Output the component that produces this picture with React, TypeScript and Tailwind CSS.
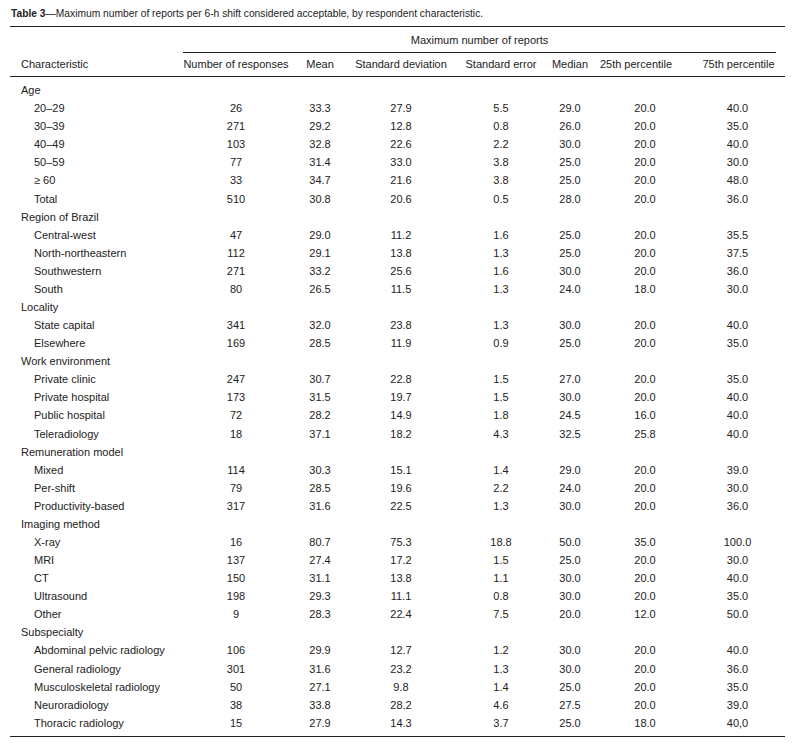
import React from "react";

type Row = { label: string; group?: boolean; v?: string[] };

const rows: Row[] = [
  { label: "Age", group: true },
  { label: "20–29", v: ["26", "33.3", "27.9", "5.5", "29.0", "20.0", "40.0"] },
  { label: "30–39", v: ["271", "29.2", "12.8", "0.8", "26.0", "20.0", "35.0"] },
  { label: "40–49", v: ["103", "32.8", "22.6", "2.2", "30.0", "20.0", "40.0"] },
  { label: "50–59", v: ["77", "31.4", "33.0", "3.8", "25.0", "20.0", "30.0"] },
  { label: "≥ 60", v: ["33", "34.7", "21.6", "3.8", "25.0", "20.0", "48.0"] },
  { label: "Total", v: ["510", "30.8", "20.6", "0.5", "28.0", "20.0", "36.0"] },
  { label: "Region of Brazil", group: true },
  { label: "Central-west", v: ["47", "29.0", "11.2", "1.6", "25.0", "20.0", "35.5"] },
  { label: "North-northeastern", v: ["112", "29.1", "13.8", "1.3", "25.0", "20.0", "37.5"] },
  { label: "Southwestern", v: ["271", "33.2", "25.6", "1.6", "30.0", "20.0", "36.0"] },
  { label: "South", v: ["80", "26.5", "11.5", "1.3", "24.0", "18.0", "30.0"] },
  { label: "Locality", group: true },
  { label: "State capital", v: ["341", "32.0", "23.8", "1.3", "30.0", "20.0", "40.0"] },
  { label: "Elsewhere", v: ["169", "28.5", "11.9", "0.9", "25.0", "20.0", "35.0"] },
  { label: "Work environment", group: true },
  { label: "Private clinic", v: ["247", "30.7", "22.8", "1.5", "27.0", "20.0", "35.0"] },
  { label: "Private hospital", v: ["173", "31.5", "19.7", "1.5", "30.0", "20.0", "40.0"] },
  { label: "Public hospital", v: ["72", "28.2", "14.9", "1.8", "24.5", "16.0", "40.0"] },
  { label: "Teleradiology", v: ["18", "37.1", "18.2", "4.3", "32.5", "25.8", "40.0"] },
  { label: "Remuneration model", group: true },
  { label: "Mixed", v: ["114", "30.3", "15.1", "1.4", "29.0", "20.0", "39.0"] },
  { label: "Per-shift", v: ["79", "28.5", "19.6", "2.2", "24.0", "20.0", "30.0"] },
  { label: "Productivity-based", v: ["317", "31.6", "22.5", "1.3", "30.0", "20.0", "36.0"] },
  { label: "Imaging method", group: true },
  { label: "X-ray", v: ["16", "80.7", "75.3", "18.8", "50.0", "35.0", "100.0"] },
  { label: "MRI", v: ["137", "27.4", "17.2", "1.5", "25.0", "20.0", "30.0"] },
  { label: "CT", v: ["150", "31.1", "13.8", "1.1", "30.0", "20.0", "40.0"] },
  { label: "Ultrasound", v: ["198", "29.3", "11.1", "0.8", "30.0", "20.0", "35.0"] },
  { label: "Other", v: ["9", "28.3", "22.4", "7.5", "20.0", "12.0", "50.0"] },
  { label: "Subspecialty", group: true },
  { label: "Abdominal pelvic radiology", v: ["106", "29.9", "12.7", "1.2", "30.0", "20.0", "40.0"] },
  { label: "General radiology", v: ["301", "31.6", "23.2", "1.3", "30.0", "20.0", "36.0"] },
  { label: "Musculoskeletal radiology", v: ["50", "27.1", "9.8", "1.4", "25.0", "20.0", "35.0"] },
  { label: "Neuroradiology", v: ["38", "33.8", "28.2", "4.6", "27.5", "20.0", "39.0"] },
  { label: "Thoracic radiology", v: ["15", "27.9", "14.3", "3.7", "25.0", "18.0", "40,0"] },
];

const valCls = [
  "text-center",
  "text-center",
  "text-center",
  "text-center",
  "text-center",
  "text-center pl-[18px]",
  "text-center pl-[7px]",
];

const headers = [
  { t: "Number of responses", c: "text-center" },
  { t: "Mean", c: "text-center" },
  { t: "Standard deviation", c: "text-center" },
  { t: "Standard error", c: "text-center" },
  { t: "Median", c: "text-center" },
  { t: "25th percentile", c: "text-center" },
  { t: "75th percentile", c: "text-center pl-[9px]" },
];

const grid = "grid grid-cols-[173px_106px_62px_100px_100px_38px_94px_102px]";

export default function App() {
  return (
    <div
      className="w-[793px] h-[743px] bg-white text-[#222] text-[11px] leading-[14px]"
      style={{ fontFamily: '"Liberation Sans", Arial, sans-serif' }}
    >
      <div className="ml-[10px] w-[775px]">
        <div className="h-[26px] pt-[7px] pl-[1px] whitespace-nowrap text-[10.25px]">
          <span className="font-bold">Table 3</span>
          <span>—Maximum number of reports per 6-h shift considered acceptable, by respondent characteristic.</span>
        </div>
        <div className="border-t border-[#222]" />
        <div className="flex">
          <div className="w-[173px]" />
          <div className="w-[593px] h-[26px] pt-[6px] text-center border-b border-[#222] whitespace-nowrap">
            Maximum number of reports
          </div>
        </div>
        <div className={`${grid} h-[24px] pt-[4px] border-b border-[#222] whitespace-nowrap`}>
          <div className="pl-[11px]">Characteristic</div>
          {headers.map((h) => (
            <div key={h.t} className={h.c}>
              {h.t}
            </div>
          ))}
        </div>
        <div className="pt-[4px] pb-[4px] border-b border-[#222]">
          {rows.map((r, i) => (
            <div key={i} className={`${grid} h-[18.08px] items-center whitespace-nowrap`}>
              <div className={r.group ? "pl-[11px]" : "pl-[24px]"}>{r.label}</div>
              {r.v
                ? r.v.map((x, j) => (
                    <div key={j} className={valCls[j]}>
                      {x}
                    </div>
                  ))
                : null}
            </div>
          ))}
        </div>
      </div>
    </div>
  );
}
